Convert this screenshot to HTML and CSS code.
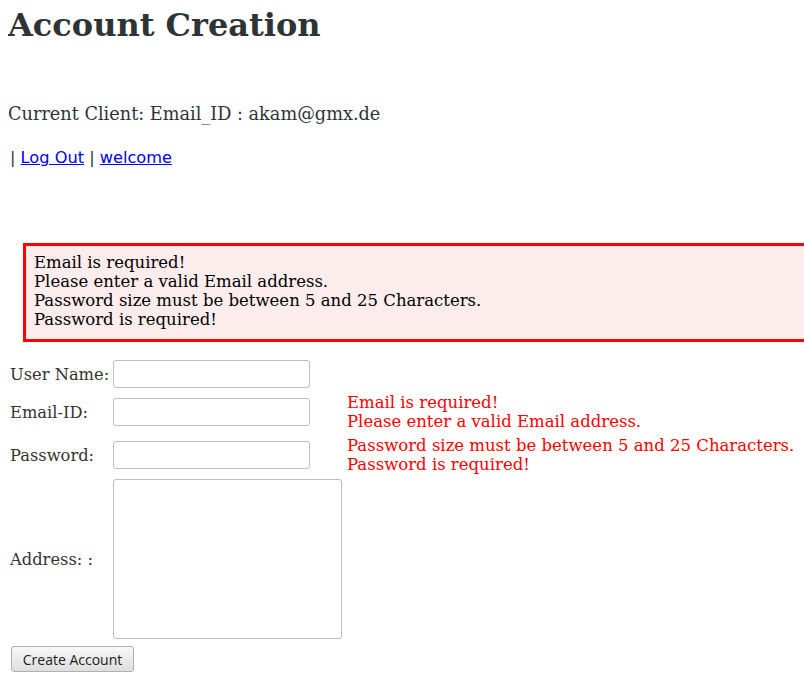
FILE: index.html
```html
<!DOCTYPE html>
<html>
<head>
<meta charset="utf-8">
<title>Account Creation</title>
<link rel="stylesheet" href="styles.css">
</head>
<body>
<h1 class="title">Account Creation</h1>
<h3 class="client">Current Client: Email_ID : akam@gmx.de</h3>
<p class="nav">| <a href="#">Log Out</a> | <a href="#">welcome</a></p>
<div class="summary">
  <div>Email is required!</div>
  <div>Please enter a valid Email address.</div>
  <div>Password size must be between 5 and 25 Characters.</div>
  <div>Password is required!</div>
</div>
<form class="form">
  <label class="lbl">User Name:</label>
  <div class="field"><input class="inp" type="text"></div>
  <div class="err"></div>

  <label class="lbl">Email-ID:</label>
  <div class="field"><input class="inp" type="text"></div>
  <div class="err"><div>Email is required!</div><div>Please enter a valid Email address.</div></div>

  <label class="lbl">Password:</label>
  <div class="field"><input class="inp" type="password"></div>
  <div class="err"><div>Password size must be between 5 and 25 Characters.</div><div>Password is required!</div></div>

  <label class="lbl">Address: :</label>
  <div class="field"><textarea class="area"></textarea></div>
  <div class="err"></div>
</form>
<div class="actions"><button class="btn" type="button">Create Account</button></div>
</body>
</html>
```
FILE: styles.css
```css
html {
  overflow: hidden;
}
body {
  margin: 8px 0 8px 8px;
  font-family: "DejaVu Serif", serif;
  color: #2e3436;
  background: #fff;
}
.title {
  margin: 0;
  font-family: "DejaVu Serif", serif;
  font-weight: bold;
  font-size: 32px;
  line-height: 34px;
  color: #2e3436;
}
.client {
  margin: 61px 0 0 0;
  font-size: 17.7px;
  font-weight: normal;
  line-height: 22px;
  color: #2e3436;
}
.nav {
  margin: 23px 0 0 2px;
  font-family: "DejaVu Sans", sans-serif;
  font-size: 16.2px;
  line-height: 20px;
  color: #2e3436;
}
.nav a {
  color: #0000ee;
}
.summary {
  margin: 75px 0 0 15px;
  border: 3px solid #ff0000;
  border-right: none;
  background: #fdecec;
  padding: 7px 8px 10px 8px;
  font-size: 16.5px;
  line-height: 19px;
  color: #000;
}
.form {
  margin: 18px 0 0 2px;
  display: grid;
  grid-template-columns: 103px 229px auto;
  row-gap: 5px;
  align-items: center;
}
.lbl {
  font-size: 16.3px;
  color: #333;
}
.field {
  display: flex;
}
.inp {
  box-sizing: border-box;
  width: 197px;
  height: 28px;
  margin: 0;
  border: 1px solid #bdbdbd;
  border-radius: 3px;
  background: #fff;
}
.area {
  box-sizing: border-box;
  width: 229px;
  height: 160px;
  margin: 0;
  border: 1px solid #bdbdbd;
  border-radius: 3px;
  resize: none;
  background: #fff;
}
.err {
  padding-left: 5px;
  color: #ff0000;
  font-size: 16.5px;
  line-height: 19px;
  white-space: nowrap;
}
.actions {
  margin: 7px 0 0 3px;
}
.btn {
  box-sizing: border-box;
  width: 123px;
  height: 26px;
  padding: 0;
  font-family: "Open Sans", "Noto Sans", sans-serif;
  font-size: 14px;
  color: #222;
  border: 1px solid #b0b0b0;
  border-radius: 3px;
  background: linear-gradient(#f8f8f8, #dedede);
}
```
